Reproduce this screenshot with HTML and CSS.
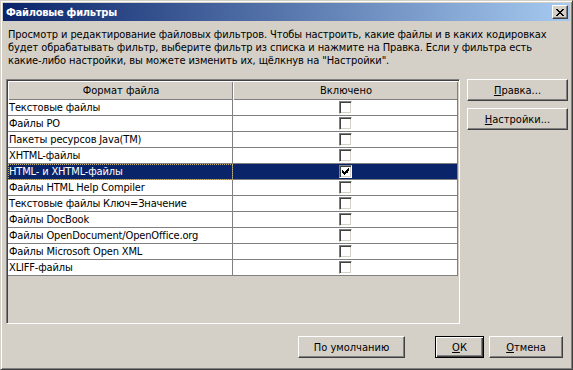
FILE: index.html
```html
<!DOCTYPE html>
<html lang="ru">
<head>
    <meta charset="UTF-8">
    <meta name="viewport" content="width=device-width, initial-scale=1.0">
    <title>Файловые фильтры</title>
    <link rel="stylesheet" href="styles.css">
</head>
<body>

<div class="window">
    <div class="titlebar">
        <span class="title">Файловые фильтры</span>
        <button class="close" title="Закрыть">
            <svg width="8" height="7" viewBox="0 0 8 7" shape-rendering="crispEdges">
                <path d="M0 0h2v1h-2zM6 0h2v1h-2zM1 1h2v1h-2zM5 1h2v1h-2zM2 2h4v1h-4zM3 3h2v1h-2zM2 4h4v1h-4zM1 5h2v1h-2zM5 5h2v1h-2zM0 6h2v1h-2zM6 6h2v1h-2z" fill="#000"/>
            </svg>
        </button>
    </div>

    <p class="intro">Просмотр и редактирование файловых фильтров. Чтобы настроить, какие файлы и в каких кодировках<br>будет обрабатывать фильтр, выберите фильтр из списка и нажмите на Правка. Если у фильтра есть<br>какие-либо настройки, вы можете изменить их, щёлкнув на "Настройки".</p>

    <div class="main">
        <div class="list">
            <div class="row head">
                <div class="cell">Формат файла</div>
                <div class="cell">Включено</div>
            </div>
            <div class="row">
                <div class="cell">Текстовые файлы</div>
                <div class="cell check"><span class="box"></span></div>
            </div>
            <div class="row">
                <div class="cell">Файлы PO</div>
                <div class="cell check"><span class="box"></span></div>
            </div>
            <div class="row">
                <div class="cell">Пакеты ресурсов Java(TM)</div>
                <div class="cell check"><span class="box"></span></div>
            </div>
            <div class="row">
                <div class="cell">XHTML-файлы</div>
                <div class="cell check"><span class="box"></span></div>
            </div>
            <div class="row selected">
                <div class="cell focus">HTML- и XHTML-файлы</div>
                <div class="cell check">
                    <span class="box">
                        <svg width="7" height="7" viewBox="0 0 7 7" shape-rendering="crispEdges">
                            <path d="M6 0h1v3h-1zM5 1h1v4h-1zM4 2h1v3h-1zM3 3h1v3h-1zM2 4h1v3h-1zM1 3h1v3h-1zM0 2h1v3h-1z" fill="#000"/>
                        </svg>
                    </span>
                </div>
            </div>
            <div class="row">
                <div class="cell">Файлы HTML Help Compiler</div>
                <div class="cell check"><span class="box"></span></div>
            </div>
            <div class="row">
                <div class="cell">Текстовые файлы Ключ=Значение</div>
                <div class="cell check"><span class="box"></span></div>
            </div>
            <div class="row">
                <div class="cell">Файлы DocBook</div>
                <div class="cell check"><span class="box"></span></div>
            </div>
            <div class="row">
                <div class="cell">Файлы OpenDocument/OpenOffice.org</div>
                <div class="cell check"><span class="box"></span></div>
            </div>
            <div class="row">
                <div class="cell">Файлы Microsoft Open XML</div>
                <div class="cell check"><span class="box"></span></div>
            </div>
            <div class="row">
                <div class="cell">XLIFF-файлы</div>
                <div class="cell check"><span class="box"></span></div>
            </div>
        </div>

        <div class="side">
            <button class="btn"><u>П</u>равка...</button>
            <button class="btn"><u>Н</u>астройки...</button>
        </div>
    </div>

    <div class="footer">
        <button class="btn btn-reset">По умолчанию</button>
        <button class="btn btn-ok"><u>О</u>К</button>
        <button class="btn btn-cancel"><u>О</u>тмена</button>
    </div>
</div>

</body>
</html>
```

FILE: styles.css
```css
body {
    margin: 0;
    padding: 0;
    background: #d4d0c8;
    font-family: "DejaVu Sans Condensed", "DejaVu Sans", sans-serif;
    font-size: 11px;
    color: #000;
}
.window {
    box-sizing: border-box;
    width: 573px;
    height: 370px;
    padding: 2px;
    background: #d4d0c8;
    border: 1px solid;
    border-color: #d4d0c8 #404040 #404040 #d4d0c8;
    box-shadow: inset 1px 1px #fff, inset -1px -1px #808080;
}
.titlebar {
    display: flex;
    align-items: center;
    height: 18px;
    background: linear-gradient(to right, #0a246a, #a6caf0);
}
.title {
    flex: 1;
    padding-left: 3px;
    color: #fff;
    font-weight: bold;
    letter-spacing: -0.25px;
}
.close {
    display: flex;
    align-items: center;
    justify-content: center;
    box-sizing: border-box;
    width: 16px;
    height: 14px;
    margin-right: 2px;
    padding: 0;
    background: #d4d0c8;
    border: 1px solid;
    border-color: #fff #404040 #404040 #fff;
    box-shadow: inset -1px -1px #808080;
}
.intro {
    margin: 7px 0 0 5px;
    line-height: 13px;
    letter-spacing: -0.1px;
}
.main {
    display: flex;
    margin-top: 12px;
}
.list {
    box-sizing: border-box;
    width: 454px;
    height: 245px;
    margin-left: 3px;
    border: 1px solid;
    border-color: #808080 #fff #fff #808080;
    box-shadow: inset 1px 1px #404040, inset -1px -1px #d4d0c8;
    padding: 1px;
    background: #d4d0c8;
}
.row {
    display: grid;
    grid-template-columns: 225px 225px;
    height: 16px;
    background: #fff;
}
.cell {
    box-sizing: border-box;
    padding-left: 1px;
    line-height: 15px;
    letter-spacing: -0.15px;
    white-space: nowrap;
    overflow: hidden;
    border-right: 1px solid #808080;
    border-bottom: 1px solid #808080;
}
.head {
    height: 19px;
    background: #d4d0c8;
}
.head .cell {
    border: none;
    text-align: center;
    line-height: 19px;
    letter-spacing: 0;
    box-shadow: inset 1px 1px #fff, inset -1px -1px #808080;
}
.check {
    display: flex;
    align-items: center;
    justify-content: center;
}
.box {
    display: flex;
    align-items: center;
    justify-content: center;
    box-sizing: border-box;
    width: 13px;
    height: 13px;
    background: #fff;
    border: 1px solid;
    border-color: #808080 #fff #fff #808080;
    box-shadow: inset 1px 1px #404040, inset -1px -1px #d4d0c8;
}
.selected {
    background: #0a246a;
    color: #fff;
}
.focus {
    outline: 1px dotted #c8b070;
    outline-offset: -1px;
}
.side {
    display: flex;
    flex-direction: column;
    gap: 7px;
    margin-left: 7px;
}
.btn {
    box-sizing: border-box;
    height: 22px;
    padding: 0;
    background: #d4d0c8;
    font-family: inherit;
    font-size: 11px;
    color: #000;
    border: 1px solid;
    border-color: #fff #404040 #404040 #fff;
    box-shadow: inset -1px -1px #808080;
}
.side .btn {
    width: 101px;
}
.footer {
    display: flex;
    justify-content: flex-end;
    margin-top: 12px;
    padding-right: 7px;
}
.btn-reset {
    width: 107px;
}
.btn-ok {
    width: 49px;
    margin-left: 30px;
    border: 1px solid #000;
    box-shadow: inset 1px 1px #fff, inset -1px -1px #404040, inset -2px -2px #808080;
}
.btn-cancel {
    width: 74px;
    margin-left: 5px;
}
```
